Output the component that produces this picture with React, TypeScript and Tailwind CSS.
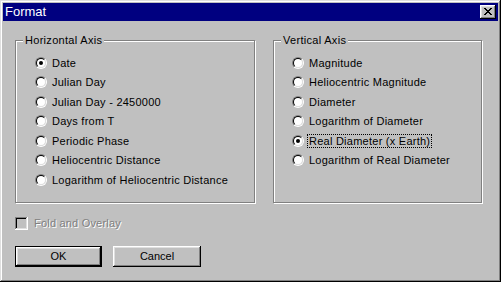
import React from 'react';

const font = { fontFamily: '"Liberation Sans", Arial, sans-serif' };

const horizontal = [
  'Date',
  'Julian Day',
  'Julian Day - 2450000',
  'Days from T',
  'Periodic Phase',
  'Heliocentric Distance',
  'Logarithm of Heliocentric Distance',
];

const vertical = [
  'Magnitude',
  'Heliocentric Magnitude',
  'Diameter',
  'Logarithm of Diameter',
  'Real Diameter (x Earth)',
  'Logarithm of Real Diameter',
];

function Radio({ checked }: { checked?: boolean }) {
  return (
    <div className="w-[12px] h-[12px] rounded-full border border-t-[#808080] border-l-[#808080] border-b-white border-r-white shrink-0">
      <div className="w-full h-full rounded-full border border-t-black border-l-black border-b-[#dfdfdf] border-r-[#dfdfdf] bg-white flex items-center justify-center">
        {checked && <div className="w-[4px] h-[4px] rounded-full bg-black" />}
      </div>
    </div>
  );
}

function RadioRow({ label, checked, focused }: { label: string; checked?: boolean; focused?: boolean }) {
  return (
    <div className="h-[19.5px] flex items-center">
      <Radio checked={checked} />
      <span
        className={
          'text-[11px] leading-[12px] tracking-[0.25px] text-black whitespace-nowrap ' +
          (focused ? 'ml-[4px] px-[1px] outline outline-1 outline-dotted outline-black' : 'ml-[5px]')
        }
      >
        {label}
      </span>
    </div>
  );
}

function GroupBox({ title, width, padLeft, children }: { title: string; width: string; padLeft: string; children: React.ReactNode }) {
  return (
    <div className={`relative h-[163px] border border-[#808080] shadow-[1px_1px_0_#fff,inset_1px_1px_0_#fff] ${width}`}>
      <span className="absolute left-[7px] -top-[8px] px-[2px] bg-[#c0c0c0] text-[11px] leading-[14px] tracking-[0.3px] text-black whitespace-nowrap">
        {title}
      </span>
      <div className={`flex flex-col pt-[12px] ${padLeft}`}>{children}</div>
    </div>
  );
}

function Button({ label, isDefault }: { label: string; isDefault?: boolean }) {
  return (
    <div className={isDefault ? 'border border-black' : ''}>
      <div
        className={
          'flex items-center justify-center bg-[#c0c0c0] text-[11px] text-black shadow-[inset_-1px_-1px_0_#000,inset_1px_1px_0_#fff,inset_-2px_-2px_0_#808080,inset_2px_2px_0_#dfdfdf] ' +
          (isDefault ? 'w-[85px] h-[19px]' : 'w-[88px] h-[21px]')
        }
      >
        {label}
      </div>
    </div>
  );
}

export default function App() {
  return (
    <div
      style={font}
      className="w-[501px] h-[282px] bg-[#c0c0c0] p-[3px] flex flex-col shadow-[inset_-1px_-1px_0_#000,inset_1px_1px_0_#dfdfdf,inset_-2px_-2px_0_#808080,inset_2px_2px_0_#fff] overflow-hidden"
    >
      {/* Title bar */}
      <div className="h-[18px] bg-[#000080] flex items-center justify-between pl-[2px] pr-[2px]">
        <span className="text-white text-[13px] leading-[18px]">Format</span>
        <div className="w-[16px] h-[14px] bg-[#c0c0c0] flex items-center justify-center shadow-[inset_-1px_-1px_0_#000,inset_1px_1px_0_#fff,inset_-2px_-2px_0_#808080,inset_2px_2px_0_#dfdfdf]">
          <svg width="8" height="7" viewBox="0 0 8 7" shapeRendering="crispEdges" className="-mt-[1px]">
            <path
              fill="#000"
              d="M0 0h2v1H0zM6 0h2v1H6zM1 1h2v1H1zM5 1h2v1H5zM2 2h4v1H2zM3 3h2v1H3zM2 4h4v1H2zM1 5h2v1H1zM5 5h2v1H5zM0 6h2v1H0zM6 6h2v1H6z"
            />
          </svg>
        </div>
      </div>

      {/* Body */}
      <div className="flex flex-col pl-[12px] pt-[19px]">
        <div className="flex gap-[18px]">
          <GroupBox title="Horizontal Axis" width="w-[240px]" padLeft="pl-[19px]">
            {horizontal.map((h, i) => (
              <RadioRow key={h} label={h} checked={i === 0} />
            ))}
          </GroupBox>
          <GroupBox title="Vertical Axis" width="w-[209px]" padLeft="pl-[18px]">
            {vertical.map((v, i) => (
              <RadioRow key={v} label={v} checked={i === 4} focused={i === 4} />
            ))}
          </GroupBox>
        </div>

        {/* Disabled checkbox */}
        <div className="flex items-center mt-[14px] h-[13px]">
          <div className="w-[13px] h-[13px] bg-[#c0c0c0] shadow-[inset_-1px_-1px_0_#fff,inset_1px_1px_0_#808080,inset_-2px_-2px_0_#dfdfdf,inset_2px_2px_0_#000]" />
          <span className="ml-[6px] text-[11px] tracking-[0.2px] text-[#808080] [text-shadow:1px_1px_0_#fff]">Fold and Overlay</span>
        </div>

        {/* Buttons */}
        <div className="flex gap-[11px] mt-[16px]">
          <Button label="OK" isDefault />
          <Button label="Cancel" />
        </div>
      </div>
    </div>
  );
}
